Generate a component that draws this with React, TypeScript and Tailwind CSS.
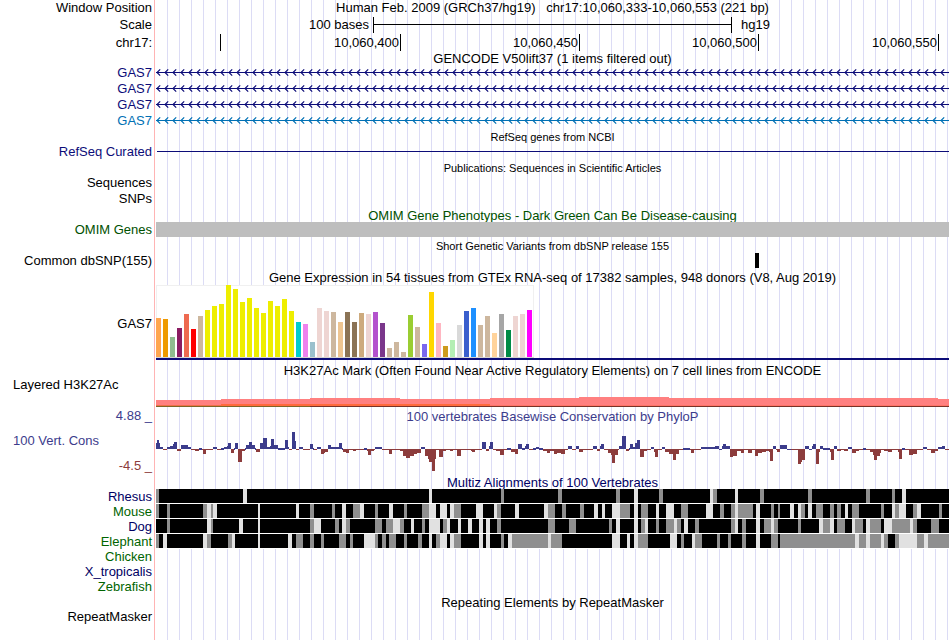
import type { ReactNode } from "react";

type Span = [number, number];

const TRACK_WIDTH = 793;

/* ---------- data ---------- */

const tissues: [number, string][] = [
  [39, "#ffa54f"], [38, "#ee9a00"], [20, "#8fbc8f"], [29, "#8b1c62"], [43, "#ee6a50"], [28, "#ff0000"],
  [41, "#cdb79e"], [47, "#eeee00"], [51, "#eeee00"], [53, "#eeee00"], [72, "#eeee00"], [68, "#eeee00"],
  [55, "#eeee00"], [59, "#eeee00"], [49, "#eeee00"], [44, "#eeee00"], [56, "#eeee00"], [51, "#eeee00"],
  [58, "#eeee00"], [46, "#eeee00"], [35, "#00cdcd"], [33, "#ee82ee"], [15, "#9ac0cd"], [49, "#eed5d2"],
  [46, "#eed5d2"], [45, "#cdb79e"], [35, "#eec591"], [45, "#8b7355"], [35, "#8b7355"], [44, "#cdaa7d"],
  [43, "#eed5d2"], [45, "#b452cd"], [34, "#7a378b"], [9, "#cdb79e"], [15, "#cdb79e"], [5, "#cdb79e"],
  [42, "#9acd32"], [30, "#cdb79e"], [13, "#7a67ee"], [65, "#ffd700"], [34, "#ffb6c1"], [11, "#cd9b1d"],
  [17, "#b4eeb4"], [32, "#d9d9d9"], [46, "#3a5fcd"], [49, "#1e90ff"], [32, "#cdb79e"], [41, "#cdb79e"],
  [24, "#ffd39b"], [43, "#a6a6a6"], [27, "#008b45"], [41, "#eed5d2"], [43, "#eed5d2"], [47, "#ff00ff"],
];

/* Conservation score as steps: [start, score]; each step lasts until the next one. */
const phylop: [number, number][] = [
  [0, 6], [1, 9], [3, 6], [4, 2], [7, -1], [11, 2], [14, 3], [17, 5], [18, 7], [21, -2], [25, 4], [32, 2],
  [35, -1], [39, -2], [43, 1], [46, -1], [47, -5], [50, -1], [57, 2], [61, -1], [65, 1], [68, 2], [71, 3],
  [72, 6], [75, -4], [78, 1], [79, 6], [82, -13], [86, -2], [89, 1], [90, 4], [93, 7], [96, 4], [99, 1],
  [100, -3], [104, 6], [107, 11], [111, 2], [114, 3], [115, 10], [118, 4], [122, 1], [129, 9], [132, 2],
  [133, -1], [136, 17], [139, 8], [140, -1], [143, 2], [147, -1], [154, 5], [157, 1], [158, -1], [161, 2],
  [165, -5], [168, -4], [169, -3], [172, 4], [175, 2], [183, 6], [186, 1], [187, -3], [190, -4], [193, -1],
  [197, -2], [200, -1], [208, 1], [211, -2], [212, -6], [215, -2], [218, -1], [219, 2], [226, -1],
  [233, -5], [236, -1], [244, -2], [247, -7], [250, -9], [254, -7], [258, -5], [261, -4], [265, 2],
  [269, -7], [272, -10], [273, -13], [276, -22], [279, -10], [280, -1], [283, -8], [287, -2], [290, -1],
  [294, -2], [297, -1], [301, -7], [305, -1], [315, -2], [316, -3], [319, -1], [326, 7], [330, -2],
  [333, 3], [334, 7], [337, -1], [340, -2], [344, -6], [348, -1], [351, 1], [355, -3], [359, -5], [362, 5],
  [366, 1], [369, 3], [370, 5], [373, -1], [377, 1], [380, 2], [383, 1], [387, -2], [391, -4], [394, -2],
  [398, -5], [401, -4], [405, -5], [409, -1], [412, 3], [416, -1], [420, 3], [423, -3], [427, -1], [437, 3],
  [441, -2], [444, 3], [445, 5], [448, -1], [452, -4], [455, -6], [456, -14], [459, -6], [462, -1],
  [463, 3], [466, 13], [470, -2], [473, 1], [474, 5], [477, 2], [479, 6], [481, 9], [484, -8], [488, -2],
  [491, -1], [495, 2], [498, -3], [499, -8], [502, -1], [506, 2], [509, -3], [513, -5], [517, -11],
  [520, -5], [523, -1], [527, 1], [534, -1], [535, -4], [538, -1], [545, 2], [559, 3], [563, 0], [566, 3],
  [567, 5], [570, 3], [574, -8], [577, -7], [581, -2], [585, -4], [588, -1], [592, -4], [596, -1],
  [599, -7], [602, -4], [606, -3], [610, -2], [613, -3], [614, -12], [617, 3], [620, -1], [621, -3],
  [624, 4], [631, 0], [635, -1], [642, -15], [645, -13], [646, -11], [649, 3], [653, 0], [656, 3],
  [657, 5], [660, -15], [663, -3], [664, 3], [667, 1], [674, -3], [675, -11], [678, 3], [681, -2],
  [685, -1], [688, -2], [692, 2], [696, -4], [700, -2], [703, -1], [707, 1], [710, -1], [714, -3],
  [717, -6], [718, -11], [721, -7], [724, -4], [725, -1], [728, -2], [732, -3], [736, -1], [742, -3],
  [743, -10], [746, 1], [749, -1], [753, -6], [757, -5], [761, -1], [767, 2], [771, -1], [775, -4],
  [779, -2], [782, 2], [786, 3], [789, -1],
];

type Species = { name: string; color: string; gray?: Span[]; light?: Span[] };

const species: Species[] = [
  {
    name: "Rhesus",
    color: "text-[#000064]",
    gray: [[0, 3], [345, 348], [402, 406], [460, 464], [503, 507], [557, 561], [604, 608], [652, 656], [710, 714], [736, 739]],
    light: [[87, 91], [273, 276], [478, 482], [554, 557], [579, 582], [746, 750]],
  },
  {
    name: "Mouse",
    color: "text-[#006400]",
    gray: [
      [0, 3], [11, 14], [47, 51], [55, 57], [154, 158], [176, 179], [197, 204], [219, 222], [248, 251], [266, 273],
      [298, 305], [341, 345], [392, 399], [406, 410], [424, 428], [464, 474], [485, 492], [525, 532], [564, 568],
      [575, 579], [582, 597], [615, 618], [622, 624], [645, 649], [660, 667], [674, 678], [681, 685], [696, 703],
      [725, 728], [739, 743], [757, 761], [783, 786],
    ],
    light: [
      [51, 55], [57, 61], [102, 104], [140, 143], [186, 190], [204, 208], [233, 237], [273, 280], [284, 291],
      [294, 298], [320, 327], [338, 341], [359, 363], [388, 392], [438, 442], [446, 449], [456, 464], [478, 482],
      [500, 503], [510, 518], [550, 557], [579, 582], [600, 604], [634, 638], [642, 645], [652, 656], [689, 692],
      [736, 739], [743, 750], [761, 765],
    ],
  },
  {
    name: "Dog",
    color: "text-[#000064]",
    gray: [
      [11, 14], [55, 57], [154, 158], [179, 183], [190, 194], [219, 226], [230, 237], [244, 248], [266, 269],
      [287, 291], [341, 345], [392, 399], [413, 420], [453, 456], [485, 489], [500, 503], [510, 518], [521, 525],
      [539, 543], [575, 579], [586, 590], [608, 615], [618, 622], [642, 645], [667, 674], [681, 689], [699, 707],
      [714, 725], [736, 754], [757, 761], [775, 783],
    ],
    light: [
      [51, 55], [83, 87], [102, 104], [158, 165], [186, 190], [237, 244], [255, 258], [273, 284], [291, 294],
      [302, 305], [312, 316], [323, 327], [330, 334], [460, 464], [478, 482], [489, 492], [518, 521], [528, 532],
      [579, 582], [600, 604], [615, 618], [663, 667], [674, 678], [696, 699], [710, 714], [728, 736], [754, 757],
    ],
  },
  {
    name: "Elephant",
    color: "text-[#006400]",
    gray: [
      [0, 3], [51, 55], [72, 76], [140, 147], [154, 158], [165, 168], [183, 190], [194, 197], [219, 222], [226, 230],
      [233, 240], [248, 251], [262, 266], [280, 284], [298, 305], [345, 348], [356, 392], [395, 406], [482, 492],
      [525, 528], [539, 546], [561, 564], [572, 575], [586, 590], [615, 622], [624, 699], [703, 710], [714, 725],
      [728, 732], [739, 743], [761, 768], [772, 793],
    ],
    light: [
      [7, 11], [47, 51], [76, 79], [102, 104], [132, 136], [208, 219], [273, 276], [284, 291], [294, 298],
      [323, 327], [330, 334], [352, 356], [392, 395], [456, 464], [471, 474], [478, 482], [514, 521], [536, 539],
      [600, 604], [699, 703], [710, 714], [725, 728], [743, 761], [768, 772],
    ],
  },
  { name: "Chicken", color: "text-[#006400]" },
  { name: "X_tropicalis", color: "text-[#000064]" },
  { name: "Zebrafish", color: "text-[#006400]" },
];

/* Top edge of the H3K27Ac signal: [start, end, top]. */
const acetylation: [number, number, number][] = [
  [0, 65, 4], [65, 154, 3], [154, 244, 2], [244, 334, 3], [334, 423, 2], [423, 513, 1], [513, 782, 2], [782, 793, 3],
];

/* ---------- layout pieces ---------- */

function Row({ label, height, children }: { label?: ReactNode; height: string; children?: ReactNode }) {
  return (
    <div className={`flex ${height}`}>
      <div className="w-[154px] shrink-0 pr-0.5 text-right">{label}</div>
      <div className="min-w-0 flex-1 border-l border-[#ffb4b4] pl-px">
        <div className="h-full bg-[repeating-linear-gradient(to_right,transparent_0_11px,#dcdcf5_11px_12px)]">
          {children}
        </div>
      </div>
    </div>
  );
}

function Title({ children, color = "text-black", size = "text-[13px]", pad = "pt-px" }: { children: ReactNode; color?: string; size?: string; pad?: string }) {
  return <h2 className={`whitespace-pre text-center ${size} ${pad} ${color}`}>{children}</h2>;
}

function Chart({ height, className, children }: { height: number; className: string; children: ReactNode }) {
  return (
    <svg
      className={`block w-full ${className}`}
      viewBox={`0 0 ${TRACK_WIDTH} ${height}`}
      preserveAspectRatio="none"
      shapeRendering="crispEdges"
      aria-hidden="true"
    >
      {children}
    </svg>
  );
}

function Transcript({ id, color, text }: { id: string; color: string; text: string }) {
  return (
    <Row height="h-4" label={<span className={`block pt-px ${text}`}>GAS7</span>}>
      <Chart height={16} className="h-4">
        <defs>
          <pattern id={id} width="8" height="16" patternUnits="userSpaceOnUse">
            <path d="M4.2 5.3 1 8.5l3.2 3.2" fill="none" stroke={color} strokeWidth="1.2" shapeRendering="geometricPrecision" />
          </pattern>
        </defs>
        <rect width={TRACK_WIDTH} height="16" fill={`url(#${id})`} />
        <rect y="8" width={TRACK_WIDTH} height="1" fill={color} />
      </Chart>
    </Row>
  );
}

/* ---------- page ---------- */

export default function App() {
  return (
    <main className="flex min-h-screen flex-col bg-white pr-px font-['Liberation_Sans',Arial,sans-serif] text-[13px] leading-4 text-black">
      <Row height="h-4" label="Window Position">
        <Title pad="pt-0">{"Human Feb. 2009 (GRCh37/hg19)   chr17:10,060,333-10,060,553 (221 bp)"}</Title>
      </Row>
      <Row height="h-[18px]" label={<span className="block pt-px">Scale</span>}>
        <div className="grid grid-cols-[217fr_359fr_217fr] pt-px">
          <span className="pr-1 text-right">100 bases</span>
          <span className="flex h-4 flex-col border-x border-black pt-[7px]">
            <span className="h-px bg-black" />
          </span>
          <span className="pl-[9px]">hg19</span>
        </div>
      </Row>
      <Row height="h-4" label={<span className="block pt-px">chr17:</span>}>
        <div className="grid h-[15px] grid-cols-[65fr_180fr_179fr_179fr_180fr_10fr] text-right">
          <span className="border-r border-black" />
          <span className="border-r border-black pr-px pt-px">10,060,400</span>
          <span className="border-r border-black pr-px pt-px">10,060,450</span>
          <span className="border-r border-black pr-px pt-px">10,060,500</span>
          <span className="border-r border-black pr-px pt-px">10,060,550</span>
        </div>
      </Row>
      <Row height="h-[14px]">
        <Title>GENCODE V50lift37 (1 items filtered out)</Title>
      </Row>
      <Transcript id="arrows-a" color="#0c0c78" text="text-[#0c0c78]" />
      <Transcript id="arrows-b" color="#0c0c78" text="text-[#0c0c78]" />
      <Transcript id="arrows-c" color="#0c0c78" text="text-[#0c0c78]" />
      <Transcript id="arrows-d" color="#0070b4" text="text-[#0070b4]" />

      <Row height="h-4">
        <Title size="text-[11px]">RefSeq genes from NCBI</Title>
      </Row>
      <Row height="h-4" label={<span className="text-[#0c0c78]">RefSeq Curated</span>}>
        <div className="pl-px pt-[7px]">
          <div className="h-px bg-[#0c0c78]" />
        </div>
      </Row>

      <Row height="h-[15px]">
        <Title size="text-[11px]" pad="pt-0">Publications: Sequences in Scientific Articles</Title>
      </Row>
      <Row height="h-4" label="Sequences" />
      <Row height="h-4" label="SNPs" />

      <Row height="h-[15px]">
        <Title color="text-[#005000]">OMIM Gene Phenotypes - Dark Green Can Be Disease-causing</Title>
      </Row>
      <Row height="h-4" label={<span className="text-[#005000]">OMIM Genes</span>}>
        <div className="h-[15px] bg-[#bebebe]" />
      </Row>

      <Row height="h-[15px]">
        <Title size="text-[11px]" pad="pt-0">Short Genetic Variants from dbSNP release 155</Title>
      </Row>
      <Row height="h-4" label="Common dbSNP(155)">
        <Chart height={15} className="h-[15px]">
          <rect x="599" width="4" height="15" fill="#000" />
        </Chart>
      </Row>

      <Row height="h-4">
        <Title>Gene Expression in 54 tissues from GTEx RNA-seq of 17382 samples, 948 donors (V8, Aug 2019)</Title>
      </Row>
      <Row height="h-[77px]" label={<span className="block pt-[31px]">GAS7</span>}>
        <Chart height={75} className="h-[75px]">
          <rect width="378" height="73" fill="#f0f0f0" />
          <rect x="1" y="1" width="376" height="71" fill="#fff" />
          <rect y="72" width="378" height="1" fill="#d3d3d3" />
          {tissues.map(([h, fill], i) => (
            <rect key={i} x={i * 7} y={72 - h} width="5" height={h} fill={fill} />
          ))}
          <rect y="73" width={TRACK_WIDTH} height="2" fill="#0c0c78" />
        </Chart>
      </Row>

      <Row height="h-[14px]">
        <Title>H3K27Ac Mark (Often Found Near Active Regulatory Elements) on 7 cell lines from ENCODE</Title>
      </Row>
      <Row height="h-8" label={<span className="block pl-[13px] pt-px text-left">Layered H3K27Ac</span>}>
        <div className="pt-5">
          <Chart height={11} className="h-[11px]">
            {acetylation.map(([start, end, top]) => (
              <rect key={start} x={start} y={top} width={end - start} height={10 - top} fill="#ff8080" />
            ))}
            <rect y="9" width="65" height="1" fill="#f07048" />
            <rect x="65" y="8" width="269" height="2" fill="#ff6a3c" />
            <rect x="334" y="9" width="459" height="1" fill="#ff7468" />
            <rect y="10" width="154" height="1" fill="#806428" />
            <rect x="154" y="10" width="639" height="1" fill="#783228" />
          </Chart>
        </div>
      </Row>

      <Row height="h-4" label={<span className="text-[#3c3c8c]">4.88 _</span>}>
        <Title color="text-[#3c3c8c]">100 vertebrates Basewise Conservation by PhyloP</Title>
      </Row>
      <Row
        height="h-[50px]"
        label={
          <>
            <span className="block pb-2 pl-[13px] pt-[9px] text-left text-[#3c3c8c]">100 Vert. Cons</span>
            <span className="block pt-px text-[#8c3c3c]">-4.5 _</span>
          </>
        }
      >
        <Chart height={50} className="h-[50px]">
          {phylop.map(([x, score], i) => {
            const end = i + 1 < phylop.length ? phylop[i + 1][0] : TRACK_WIDTH;
            const up = score >= 0;
            return (
              <rect
                key={x}
                x={x}
                y={up ? 25 - score : 25}
                width={end - x}
                height={up ? score + (score < 2 ? 1 : 0) : -score}
                fill={up ? "#3c3c8c" : "#8c3c3c"}
              />
            );
          })}
        </Chart>
      </Row>

      <Row height="h-[15px]">
        <Title color="text-[#000064]">Multiz Alignments of 100 Vertebrates</Title>
      </Row>
      {species.map(({ name, color, gray, light }) => (
        <Row key={name} height="h-[15px]" label={<span className={color}>{name}</span>}>
          {gray && light && (
            <Chart height={15} className="h-[15px]">
              <rect width={TRACK_WIDTH} height="14" fill="#000" />
              <rect y="14" width={TRACK_WIDTH} height="1" fill="#fff" />
              {gray.map(([a, b]) => (
                <rect key={a} x={a} width={b - a} height="14" fill="#8f8f8f" />
              ))}
              {light.map(([a, b]) => (
                <rect key={a} x={a} width={b - a} height="14" fill="#e1e1e1" />
              ))}
            </Chart>
          )}
        </Row>
      ))}

      <Row height="h-[15px]">
        <Title>Repeating Elements by RepeatMasker</Title>
      </Row>
      <Row height="min-h-8 flex-1" label="RepeatMasker" />
    </main>
  );
}
